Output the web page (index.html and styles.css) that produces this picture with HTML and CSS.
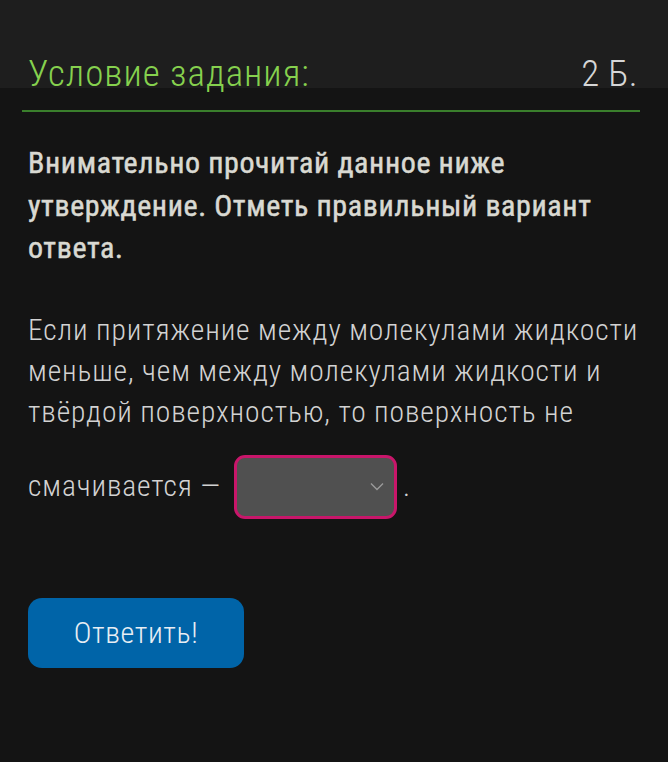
FILE: index.html
```html
<!DOCTYPE html>
<html lang="ru">
<head>
<meta charset="utf-8">
<link rel="stylesheet" href="styles.css">
</head>
<body>
<div class="topband"></div>
<main class="task">
  <header class="task-head">
    <h1 class="task-title">Условие задания:</h1>
    <span class="task-score">2 Б.</span>
  </header>
  <p class="task-intro">Внимательно прочитай данное ниже утверждение. Отметь правильный вариант ответа.</p>
  <p class="task-text">Если притяжение между молекулами жидкости меньше, чем между молекулами жидкости и твёрдой поверхностью, то поверхность не</p>
  <p class="task-text task-fill"><span>смачивается —</span><span class="select"><svg class="chev" width="14" height="9" viewBox="0 0 14 9"><path d="M1 1.5 L7 7.5 L13 1.5" fill="none" stroke="#9a9a9a" stroke-width="1.4"/></svg></span><span>.</span></p>
  <button class="answer-btn">Ответить!</button>
</main>
</body>
</html>
```
FILE: styles.css
```css
html, body {
  margin: 0;
  padding: 0;
  background: #141414;
}
body {
  width: 668px;
  height: 762px;
  overflow: hidden;
  position: relative;
  font-family: "Roboto Condensed", "Liberation Sans Narrow", "DejaVu Sans Condensed", Roboto, sans-serif;
  font-stretch: condensed;
}
.topband {
  position: absolute;
  left: 0;
  top: 0;
  width: 668px;
  height: 88px;
  background: #1e1e1e;
}
.task {
  position: relative;
  padding: 52px 28px 0 28px;
}
.task-head {
  display: flex;
  justify-content: space-between;
  align-items: baseline;
  border-bottom: 2px solid #3a7f2c;
  margin: 0 0 0 -6px;
  padding: 0 2px 14px 6px;
}
.task-title {
  margin: 0;
  font-weight: 300;
  font-size: 37px;
  letter-spacing: 1px;
  line-height: 44px;
  color: #86d14e;
}
.task-score {
  font-weight: 300;
  font-size: 37px;
  letter-spacing: 0.3px;
  color: #d6d6d6;
}
.task-intro {
  margin: 30px 0 0 0;
  font-weight: 400;
  font-size: 30px;
  line-height: 42.5px;
  letter-spacing: 0.6px;
  -webkit-text-stroke: 0.5px #d9d9d2;
  color: #d9d9d2;
}
.task-text {
  margin: 40px 0 0 0;
  font-weight: 300;
  font-size: 29.5px;
  line-height: 41px;
  letter-spacing: 0.9px;
  color: #d2d2d2;
}
.task-fill {
  margin-top: 22px;
  display: flex;
  align-items: center;
}
.select {
  display: inline-flex;
  align-items: center;
  justify-content: flex-end;
  box-sizing: border-box;
  width: 163px;
  height: 64px;
  border: 3px solid #c8166a;
  border-radius: 11px;
  background: #505050;
  padding-right: 10px;
  margin: 0 6px 0 13px;
}
.chev {
  display: block;
}
.answer-btn {
  display: block;
  margin-top: 79px;
  width: 216px;
  height: 70px;
  border: none;
  border-radius: 14px;
  background: #0064a8;
  color: #e8eef4;
  font-family: inherit;
  font-stretch: condensed;
  font-weight: 300;
  font-size: 30px;
  letter-spacing: 0.6px;
}
```
